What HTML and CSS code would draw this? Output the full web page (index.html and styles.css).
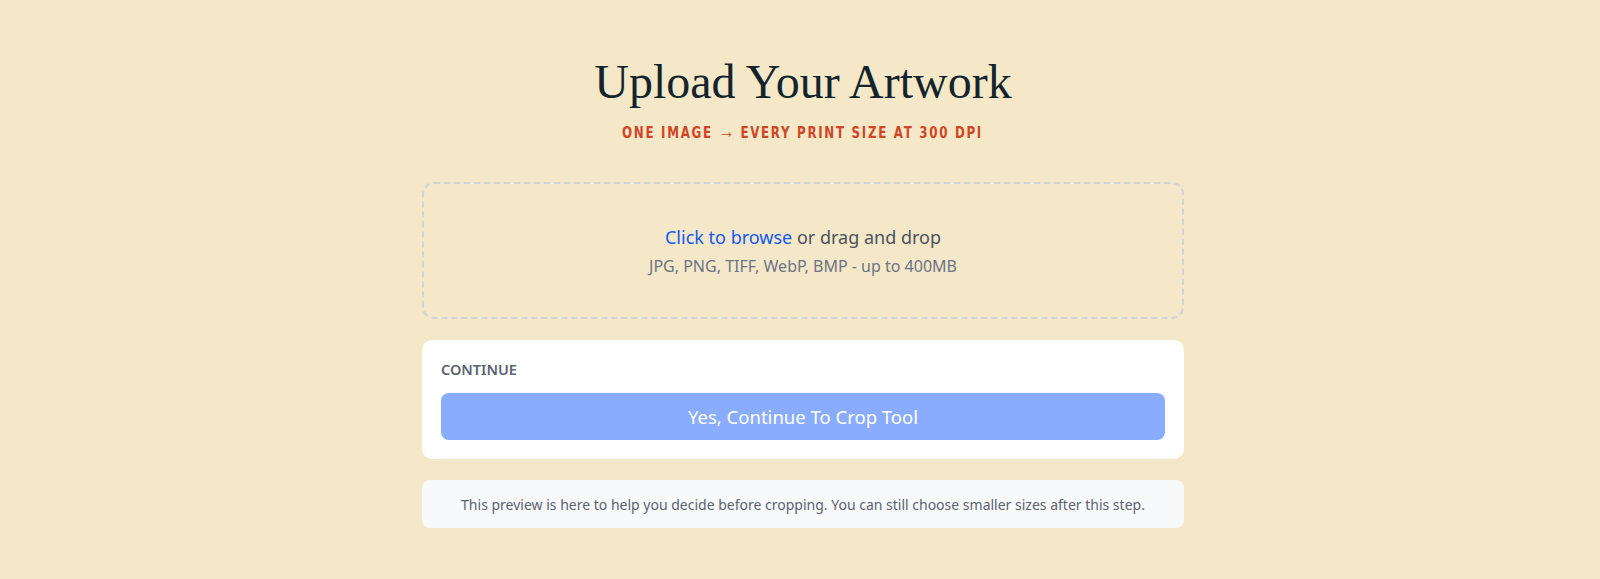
FILE: index.html
```html
<!DOCTYPE html>
<html lang="en">
<head>
    <meta charset="UTF-8">
    <title>Upload Your Artwork</title>
    <link rel="stylesheet" href="styles.css">
</head>
<body>
<div class="page">
    <div class="header">
        <h1>Upload Your Artwork</h1>
        <div class="tagline"><span>One image <i class="arrow">&rarr;</i> every print size at 300 DPI</span></div>
    </div>

    <label class="dropzone">
        <input type="file" accept="image/*">
        <div class="drop-main"><span class="browse">Click to browse</span> or drag and drop</div>
        <div class="drop-hint">JPG, PNG, TIFF, WebP, BMP - up to 400MB</div>
    </label>

    <div class="card">
        <div class="card-label">Continue</div>
        <button class="continue" disabled>Yes, Continue To Crop Tool</button>
    </div>

    <div class="note">
        This preview is here to help you decide before cropping. You can still choose smaller sizes after this step.
    </div>
</div>
</body>
</html>
```

FILE: styles.css
```css
html, body {
    margin: 0;
    background: #f5e8c8;
}

body {
    font-family: "Noto Sans", "Open Sans", sans-serif;
    padding-left: 6px;
}

.page {
    width: 762px;
    margin: 0 auto;
    padding-top: 53px;
    display: flex;
    flex-direction: column;
    gap: 21px;
}

.header {
    text-align: center;
    margin-bottom: 18px;
}

h1 {
    margin: 0;
    font-family: "Liberation Serif", serif;
    font-weight: normal;
    font-size: 48px;
    line-height: 58px;
    color: #14242c;
}

.tagline {
    margin-top: 12px;
    height: 20px;
    font-family: "DejaVu Sans Condensed", "DejaVu Sans", sans-serif;
    font-stretch: condensed;
    font-weight: bold;
    font-size: 16.5px;
    line-height: 20px;
    letter-spacing: 2.1px;
    text-transform: uppercase;
    color: #cf4526;
}

.tagline span {
    display: inline-block;
    transform: scaleX(0.8);
}

.tagline .arrow {
    font-family: "Liberation Serif", serif;
    font-style: normal;
    font-weight: normal;
    font-size: 20px;
    line-height: 0;
    letter-spacing: 0;
}

.dropzone {
    height: 133px;
    border: 2px dashed #cdd3dc;
    border-radius: 12px;
    display: flex;
    flex-direction: column;
    align-items: center;
    justify-content: center;
    gap: 6px;
    cursor: pointer;
}

.dropzone input {
    display: none;
}

.drop-main {
    font-size: 18px;
    line-height: 24px;
    color: #4a5260;
}

.browse {
    color: #1358f5;
}

.drop-hint {
    font-size: 16px;
    line-height: 22px;
    color: #6b7485;
}

.card {
    background: #fff;
    border-radius: 10px;
    padding: 19px;
}

.card-label {
    font-size: 14.5px;
    line-height: 20px;
    font-weight: 600;
    text-transform: uppercase;
    color: #5b6272;
    margin-bottom: 14px;
}

.continue {
    display: block;
    width: 100%;
    height: 47px;
    border: none;
    border-radius: 8px;
    background: #8aacff;
    color: #fff;
    font-family: inherit;
    font-size: 18.5px;
}

.note {
    background: #f8f9fb;
    border-radius: 8px;
    padding: 15px 20px 14px;
    text-align: center;
    font-size: 14px;
    line-height: 19px;
    color: #5b6272;
}
```
